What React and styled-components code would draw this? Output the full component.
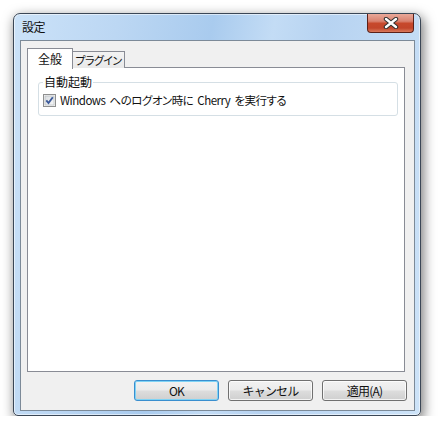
import React from 'react'
import styled, { createGlobalStyle } from 'styled-components'

const GlobalStyle = createGlobalStyle`
    html, body {
        margin: 0;
        padding: 0;
        background: #ffffff;
    }
    body {
        font-family: "Noto Sans CJK JP", "Liberation Sans", sans-serif;
        font-size: 12px;
        font-feature-settings: "palt";
    }
`

const Page = styled.div`
    padding: 13px 0 0 13px;
`

const Window = styled.div`
    box-sizing: border-box;
    width: 408px;
    height: 403px;
    display: flex;
    flex-direction: column;
    padding: 0 5px 4px 6px;
    border: 1px solid #3b4756;
    border-radius: 7px 7px 5px 5px;
    background: linear-gradient(100deg, #cbe2f8 0%, #bcd7f3 22%, #a9cbee 42%, #c3dcf5 55%, #b7d3f1 66%, #cde3f8 100%);
    box-shadow: inset 0 0 0 1px rgba(255, 255, 255, 0.55), 2px 4px 12px 1px rgba(0, 0, 0, 0.5);
`

const TitleBar = styled.div`
    height: 26px;
    margin: 0 -5px 0 -6px;
    padding: 0 6px 0 8px;
    display: flex;
    align-items: center;
`

const Title = styled.span`
    flex: 1;
    color: #111;
    font-size: 12px;
    line-height: 14px;
    letter-spacing: -0.5px;
`

const CloseButton = styled.div`
    align-self: flex-start;
    box-sizing: border-box;
    width: 47px;
    height: 19px;
    border: 1px solid #5b2018;
    border-top: none;
    border-radius: 0 0 4px 4px;
    background: linear-gradient(#e9a899 0%, #d98270 40%, #c7482c 52%, #c2452b 78%, #da7a5c 100%);
    display: flex;
    align-items: center;
    justify-content: center;
`

const Client = styled.div`
    flex: 1;
    display: flex;
    flex-direction: column;
    padding: 7px 9px 9px 6px;
    border: 1px solid #7c8a98;
    background: #f0f0f0;
`

const TabStrip = styled.div`
    display: flex;
    align-items: flex-end;
    height: 20px;
    margin-bottom: -1px;
`

const Tab = styled.div`
    position: relative;
    z-index: ${p => (p.$active ? 2 : 1)};
    box-sizing: border-box;
    height: ${p => (p.$active ? '21px' : '17px')};
    width: ${p => (p.$active ? '46px' : '53px')};
    margin-left: ${p => (p.$active ? '0' : '-1px')};
    margin-bottom: ${p => (p.$active ? '-1px' : '0')};
    border: 1px solid #898c95;
    border-bottom: none;
    background: ${p => (p.$active ? '#ffffff' : 'linear-gradient(#f3f3f3, #e9e9e9)')};
    display: flex;
    align-items: center;
    justify-content: center;
    padding-bottom: ${p => (p.$active ? '2px' : '0')};
    white-space: nowrap;
    font-size: ${p => (p.$active ? '12px' : '11px')};
    letter-spacing: ${p => (p.$active ? '0' : '-0.6px')};
    color: #111;
`

const Panel = styled.div`
    flex: 1;
    border: 1px solid #898c95;
    background: #ffffff;
    padding: 7px 6px 0 10px;
`

const Group = styled.fieldset`
    margin: 0;
    padding: 3px 4px 7px 4px;
    border: 1px solid #d5dfe5;
    border-radius: 3px;
`

const GroupLabel = styled.legend`
    padding: 0 1px;
    font-size: 12px;
    line-height: 14px;
    color: #111;
`

const CheckRow = styled.label`
    display: flex;
    align-items: center;
    gap: 4px;
    height: 16px;
    font-size: 11.5px;
    letter-spacing: -0.5px;
    word-spacing: 2px;
    white-space: nowrap;
    color: #111;
`

const ButtonRow = styled.div`
    display: flex;
    justify-content: flex-end;
    gap: 9px;
    margin-top: 8px;
    margin-right: -2px;
`

const Button = styled.button`
    box-sizing: border-box;
    width: 85px;
    height: 21px;
    padding: 0;
    border: 1px solid ${p => (p.$default ? '#3a8fcf' : '#707070')};
    border-radius: 3px;
    background: linear-gradient(#f2f2f2 0%, #ebebeb 48%, #dddddd 52%, #cfcfcf 100%);
    box-shadow: inset 0 0 0 1px ${p => (p.$default ? '#7fd3f5' : 'rgba(255, 255, 255, 0.75)')};
    font-family: inherit;
    font-size: 12px;
    letter-spacing: -0.8px;
    color: #111;
`

function CloseIcon() {
  return (
    <svg width="16" height="12" viewBox="0 0 16 12">
      <path d="M3 2 L13 10 M13 2 L3 10" stroke="#2f2f2f" strokeWidth="4.4" strokeLinecap="round" />
      <path d="M3 2 L13 10 M13 2 L3 10" stroke="#ffffff" strokeWidth="2.4" strokeLinecap="round" />
    </svg>
  )
}

function CheckIcon() {
  return (
    <svg width="13" height="13" viewBox="0 0 13 13">
      <defs>
        <linearGradient id="cbFill" x1="0" y1="0" x2="1" y2="1">
          <stop offset="0" stopColor="#d9dcdf" />
          <stop offset="1" stopColor="#f7f8f9" />
        </linearGradient>
      </defs>
      <rect x="0.5" y="0.5" width="12" height="12" fill="#f4f4f4" stroke="#8e8f8f" />
      <rect x="2" y="2" width="9" height="9" fill="url(#cbFill)" stroke="#b0b4b8" strokeWidth="0.6" />
      <path d="M3.3 6.3 L5.5 9 L9.8 3.2" fill="none" stroke="#3d5b9b" strokeWidth="1.9" />
    </svg>
  )
}

export default function App() {
  return (
    <Page>
      <GlobalStyle />
      <Window>
        <TitleBar>
          <Title>設定</Title>
          <CloseButton>
            <CloseIcon />
          </CloseButton>
        </TitleBar>
        <Client>
          <TabStrip>
            <Tab $active>全般</Tab>
            <Tab>プラグイン</Tab>
          </TabStrip>
          <Panel>
            <Group>
              <GroupLabel>自動起動</GroupLabel>
              <CheckRow>
                <CheckIcon />
                Windows へのログオン時に Cherry を実行する
              </CheckRow>
            </Group>
          </Panel>
          <ButtonRow>
            <Button $default>OK</Button>
            <Button>キャンセル</Button>
            <Button>適用(A)</Button>
          </ButtonRow>
        </Client>
      </Window>
    </Page>
  )
}
